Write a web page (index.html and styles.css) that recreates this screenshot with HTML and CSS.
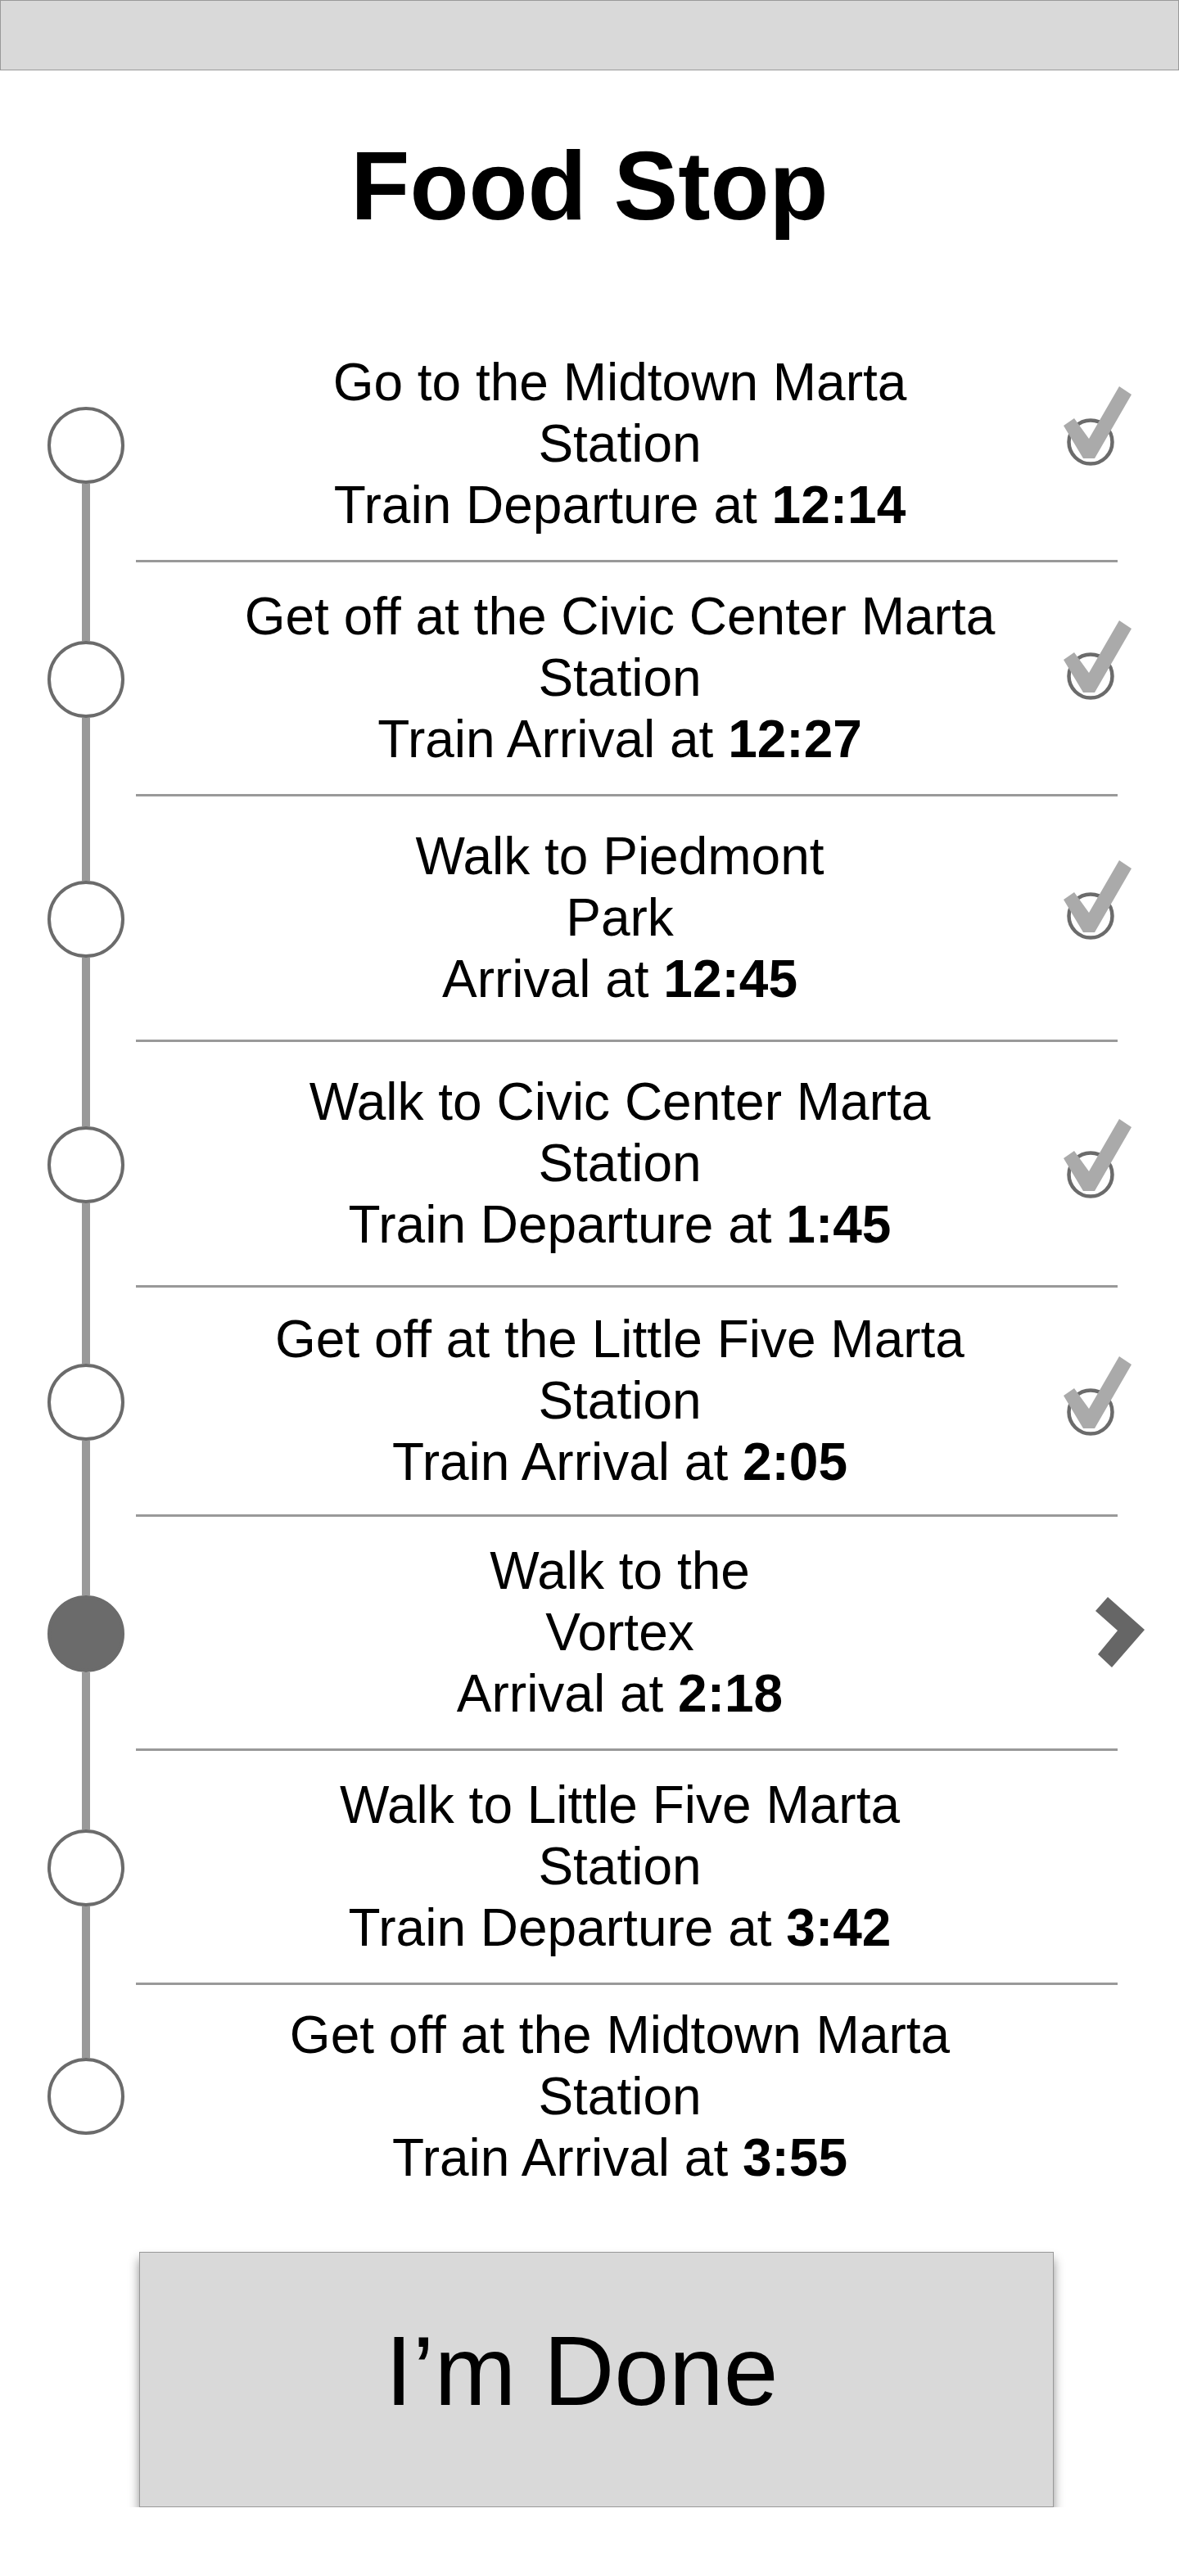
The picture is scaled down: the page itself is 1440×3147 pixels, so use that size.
FILE: index.html
```html
<!DOCTYPE html>
<html lang="en">
<head>
<meta charset="utf-8">
<title>Food Stop</title>
<link rel="stylesheet" href="styles.css">
</head>
<body>
<header class="topbar"></header>
<main class="page">
  <h1 class="title">Food Stop</h1>
  <ol class="steps">
    <li class="step">
      <div class="step-marker"><span class="rail"></span><span class="dot"></span><span class="rail"></span></div>
      <div class="step-body">
        <p class="step-text"><span>Go to the Midtown Marta</span><span>Station</span><span>Train Departure at <b>12:14</b></span></p>
        <div class="step-icon">
          <svg class="check" width="110" height="160" viewBox="0 0 110 160"><circle cx="42" cy="77" r="26.5" fill="none" stroke="#6b6b6b" stroke-width="4.5"/><polygon points="9,57 22,48 40,73 77,9 92,19 47,97 33,97" fill="#aaaaaa"/></svg>
        </div>
      </div>
    </li>
    <li class="step">
      <div class="step-marker"><span class="rail"></span><span class="dot"></span><span class="rail"></span></div>
      <div class="step-body">
        <p class="step-text"><span>Get off at the Civic Center Marta</span><span>Station</span><span>Train Arrival at <b>12:27</b></span></p>
        <div class="step-icon">
          <svg class="check" width="110" height="160" viewBox="0 0 110 160"><circle cx="42" cy="77" r="26.5" fill="none" stroke="#6b6b6b" stroke-width="4.5"/><polygon points="9,57 22,48 40,73 77,9 92,19 47,97 33,97" fill="#aaaaaa"/></svg>
        </div>
      </div>
    </li>
    <li class="step step--tall">
      <div class="step-marker"><span class="rail"></span><span class="dot"></span><span class="rail"></span></div>
      <div class="step-body">
        <p class="step-text"><span>Walk to Piedmont</span><span>Park</span><span>Arrival at <b>12:45</b></span></p>
        <div class="step-icon">
          <svg class="check" width="110" height="160" viewBox="0 0 110 160"><circle cx="42" cy="77" r="26.5" fill="none" stroke="#6b6b6b" stroke-width="4.5"/><polygon points="9,57 22,48 40,73 77,9 92,19 47,97 33,97" fill="#aaaaaa"/></svg>
        </div>
      </div>
    </li>
    <li class="step step--tall">
      <div class="step-marker"><span class="rail"></span><span class="dot"></span><span class="rail"></span></div>
      <div class="step-body">
        <p class="step-text"><span>Walk to Civic Center Marta</span><span>Station</span><span>Train Departure at <b>1:45</b></span></p>
        <div class="step-icon step-icon--low">
          <svg class="check" width="110" height="160" viewBox="0 0 110 160"><circle cx="42" cy="77" r="26.5" fill="none" stroke="#6b6b6b" stroke-width="4.5"/><polygon points="9,57 22,48 40,73 77,9 92,19 47,97 33,97" fill="#aaaaaa"/></svg>
        </div>
      </div>
    </li>
    <li class="step step--short">
      <div class="step-marker"><span class="rail"></span><span class="dot"></span><span class="rail"></span></div>
      <div class="step-body">
        <p class="step-text"><span>Get off at the Little Five Marta</span><span>Station</span><span>Train Arrival at <b>2:05</b></span></p>
        <div class="step-icon step-icon--low">
          <svg class="check" width="110" height="160" viewBox="0 0 110 160"><circle cx="42" cy="77" r="26.5" fill="none" stroke="#6b6b6b" stroke-width="4.5"/><polygon points="9,57 22,48 40,73 77,9 92,19 47,97 33,97" fill="#aaaaaa"/></svg>
        </div>
      </div>
    </li>
    <li class="step">
      <div class="step-marker"><span class="rail"></span><span class="dot dot--current"></span><span class="rail"></span></div>
      <div class="step-body">
        <p class="step-text"><span>Walk to the</span><span>Vortex</span><span>Arrival at <b>2:18</b></span></p>
        <div class="step-icon">
          <svg class="chevron" width="110" height="160" viewBox="0 0 110 160"><polygon points="48,53 63,36 108,76 68,122 51,106 75,77" fill="#666666"/></svg>
        </div>
      </div>
    </li>
    <li class="step">
      <div class="step-marker"><span class="rail"></span><span class="dot"></span><span class="rail"></span></div>
      <div class="step-body">
        <p class="step-text"><span>Walk to Little Five Marta</span><span>Station</span><span>Train Departure at <b>3:42</b></span></p>
        <div class="step-icon"></div>
      </div>
    </li>
    <li class="step step--last">
      <div class="step-marker"><span class="rail"></span><span class="dot"></span><span class="rail"></span></div>
      <div class="step-body">
        <p class="step-text"><span>Get off at the Midtown Marta</span><span>Station</span><span>Train Arrival at <b>3:55</b></span></p>
        <div class="step-icon"></div>
      </div>
    </li>
  </ol>
  <button class="done-btn" type="button">I’m Done</button>
</main>
</body>
</html>
```

FILE: styles.css
```css
html, body {
  margin: 0;
  padding: 0;
  background: #ffffff;
}

body {
  font-family: "Liberation Sans", Arial, Helvetica, sans-serif;
  color: #000000;
}

.topbar {
  height: 86px;
  box-sizing: border-box;
  background: #d9d9d9;
  border: 1px solid #999999;
}

.page {
  display: flex;
  flex-direction: column;
}

.title {
  margin: 73px 0 0;
  font-size: 118px;
  line-height: 136px;
  font-weight: 700;
  text-align: center;
}

.steps {
  list-style: none;
  margin: 106px 0 0;
  padding: 0;
}

.step {
  display: flex;
  height: 286px;
}

.step--tall {
  height: 300px;
}

.step--short {
  height: 280px;
}

.step--last {
  height: 272px;
}

.step-marker {
  width: 94px;
  margin-left: 58px;
  margin-right: 14px;
  display: flex;
  flex-direction: column;
  align-items: center;
  flex: none;
}

.rail {
  flex: 1;
  width: 10px;
  background: #999999;
}

.step:first-child .rail:first-child,
.step:last-child .rail:last-child {
  visibility: hidden;
}

.dot {
  flex: none;
  width: 94px;
  height: 94px;
  box-sizing: border-box;
  border: 4px solid #6b6b6b;
  border-radius: 50%;
  background: #ffffff;
}

.dot--current {
  background: #6b6b6b;
}

.step-body {
  flex: 1;
  display: flex;
  align-items: center;
  margin-right: 75px;
  border-bottom: 3px solid #999999;
}

.step:last-child .step-body {
  border-bottom: none;
}

.step-text {
  flex: 1;
  margin: 0;
  padding-left: 58px;
  text-align: center;
  font-size: 64px;
  line-height: 75px;
}

.step-text span {
  display: block;
}

.step-text b {
  font-weight: 700;
}

.step-icon {
  flex: none;
  width: 110px;
  margin-right: -35px;
  display: flex;
  align-items: center;
}

.step-icon svg {
  display: block;
}

.step-icon--low svg {
  margin-top: 32px;
}

.done-btn {
  margin: 54px 0 0 170px;
  width: 1117px;
  height: 312px;
  box-sizing: border-box;
  display: flex;
  align-items: center;
  justify-content: center;
  padding: 0 36px 22px 0;
  background: #d9d9d9;
  border: 1px solid #999999;
  border-radius: 0;
  box-shadow: 0 9px 12px rgba(0, 0, 0, 0.45);
  font-family: "Liberation Sans", Arial, Helvetica, sans-serif;
  font-size: 120px;
  color: #000000;
  cursor: pointer;
}
```
